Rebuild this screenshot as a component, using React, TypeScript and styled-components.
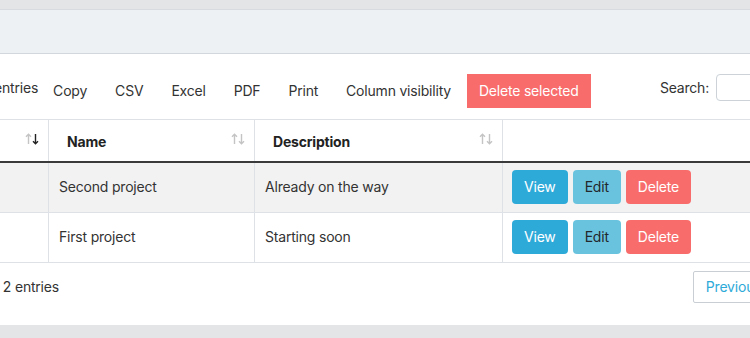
import styled, { createGlobalStyle } from 'styled-components';

type Project = {
  id: number;
  name: string;
  description: string;
};

const projects: Project[] = [
  { id: 2, name: 'Second project', description: 'Already on the way' },
  { id: 1, name: 'First project', description: 'Starting soon' },
];

const exportButtons = ['Copy', 'CSV', 'Excel', 'PDF', 'Print', 'Column visibility'];

const GlobalStyle = createGlobalStyle`
  html, body {
    margin: 0;
    padding: 0;
  }

  body {
    font-family: Inter, "Noto Sans", sans-serif;
    font-size: 14px;
    line-height: 20px;
    letter-spacing: -0.2px;
    color: #333;
    background: #e4e5e6;
  }

  button, input, select {
    font: inherit;
    letter-spacing: inherit;
  }
`;

function SortIcon({ active }: { active?: 'asc' | 'desc' }) {
  const up = active === 'asc' ? '#222' : '#c4c4c4';
  const down = active === 'desc' ? '#222' : '#c4c4c4';
  return (
    <svg width="14" height="12" viewBox="0 0 14 12" fill="none" strokeWidth="1.4">
      <path d="M3.5 11V1.2M1 3.7L3.5 1.2L6 3.7" stroke={up} />
      <path d="M10.5 1V10.8M8 8.3L10.5 10.8L13 8.3" stroke={down} />
    </svg>
  );
}

export default function App() {
  return (
    <Viewport>
      <GlobalStyle />
      <Shift>
        <Card>
          <CardHeader />
          <CardBody>
            <Toolbar>
              <LengthLabel>
                Show
                <Select defaultValue="10">
                  <option value="10">10</option>
                  <option value="25">25</option>
                  <option value="50">50</option>
                </Select>
                entries
              </LengthLabel>
              <ButtonGroup>
                {exportButtons.map(label => (
                  <ToolButton key={label}>{label}</ToolButton>
                ))}
                <ToolButton $danger>Delete selected</ToolButton>
              </ButtonGroup>
              <SearchLabel>
                Search:
                <SearchInput type="search" />
              </SearchLabel>
            </Toolbar>

            <Table>
              <colgroup>
                <col style={{ width: 163 }} />
                <col style={{ width: 206 }} />
                <col style={{ width: 248 }} />
                <col />
              </colgroup>
              <thead>
                <tr>
                  <Th>
                    <HeadInner>
                      ID
                      <SortIcon active="desc" />
                    </HeadInner>
                  </Th>
                  <Th>
                    <HeadInner>
                      Name
                      <SortIcon />
                    </HeadInner>
                  </Th>
                  <Th>
                    <HeadInner>
                      Description
                      <SortIcon />
                    </HeadInner>
                  </Th>
                  <Th />
                </tr>
              </thead>
              <tbody>
                {projects.map(project => (
                  <Row key={project.id}>
                    <Td>{project.id}</Td>
                    <Td>{project.name}</Td>
                    <Td>{project.description}</Td>
                    <ActionCell>
                      <Actions>
                        <ActionButton $variant="view">View</ActionButton>
                        <ActionButton $variant="edit">Edit</ActionButton>
                        <ActionButton $variant="delete">Delete</ActionButton>
                      </Actions>
                    </ActionCell>
                  </Row>
                ))}
              </tbody>
            </Table>

            <Footer>
              <Info>Showing 1 to 2 of 2 entries</Info>
              <Pagination>
                <PageButton>Previous</PageButton>
                <PageButton $current>1</PageButton>
                <PageButton>Next</PageButton>
              </Pagination>
            </Footer>
          </CardBody>
        </Card>
      </Shift>
    </Viewport>
  );
}

const Viewport = styled.div`
  width: 750px;
  height: 338px;
  overflow: hidden;
  background: #e4e5e6;
`;

const Shift = styled.div`
  width: 1015px;
  margin-left: -135px;
  padding-top: 9px;
`;

const Card = styled.div`
  border-top: 1px solid #d8dbe0;
  background: #fff;
`;

const CardHeader = styled.div`
  height: 43px;
  background: #eef1f4;
  border-bottom: 1px solid #d1d7dc;
`;

const CardBody = styled.div`
  padding: 20px 20px 22px;
`;

const Toolbar = styled.div`
  display: flex;
  align-items: flex-start;
`;

const LengthLabel = styled.label`
  display: flex;
  align-items: center;
  gap: 5px;
  height: 27px;
  margin-right: 3px;
`;

const Select = styled.select`
  width: 63px;
  height: 27px;
  padding: 0 6px;
  color: #333;
  border: 1px solid #ccd2d8;
  border-radius: 4px;
  background: #fff;
`;

const ButtonGroup = styled.div`
  display: flex;
  gap: 4px;
`;

const ToolButton = styled.button<{ $danger?: boolean }>`
  height: 34px;
  padding: 0 12px;
  border: 0;
  border-radius: 0;
  color: ${p => (p.$danger ? '#fff' : '#333')};
  background: ${p => (p.$danger ? '#f86c6b' : 'transparent')};
`;

const SearchLabel = styled.label`
  display: flex;
  align-items: center;
  gap: 7px;
  height: 27px;
  margin-left: auto;
`;

const SearchInput = styled.input`
  box-sizing: border-box;
  width: 144px;
  height: 27px;
  border: 1px solid #ccd2d8;
  border-radius: 4px;
`;

const Table = styled.table`
  width: 100%;
  margin-top: 11px;
  border-collapse: collapse;
  table-layout: fixed;
  border-top: 1px solid #dee2e6;
  border-bottom: 1px solid #dee2e6;
`;

const Th = styled.th`
  height: 42px;
  padding: 4px 9px 0 18px;
  box-sizing: border-box;
  text-align: left;
  font-weight: 700;
  color: #222;
  border-left: 1px solid #dee2e6;
  border-right: 1px solid #dee2e6;
  border-bottom: 2px solid #3a3a3a;
`;

const HeadInner = styled.div`
  display: flex;
  justify-content: space-between;
  align-items: center;

  svg {
    margin-top: -7px;
  }
`;

const Row = styled.tr`
  &:nth-child(odd) {
    background: #f2f2f2;
  }

  & + & td {
    border-top: 1px solid #dee2e6;
  }
`;

const Td = styled.td`
  height: 50px;
  padding: 0 10px;
  box-sizing: border-box;
  vertical-align: middle;
  border-left: 1px solid #dee2e6;
  border-right: 1px solid #dee2e6;
  white-space: nowrap;
`;

const ActionCell = styled(Td)`
  padding: 7px 9px 8px;
`;

const Actions = styled.div`
  display: flex;
  gap: 5px;
`;

const variantColors = {
  view: { bg: '#2eaad9', fg: '#fff' },
  edit: { bg: '#6ac3de', fg: '#23282c' },
  delete: { bg: '#f86c6b', fg: '#fff' },
};

const ActionButton = styled.button<{ $variant: keyof typeof variantColors }>`
  height: 34px;
  padding: 0 12px;
  border: 0;
  border-radius: 4px;
  color: ${p => variantColors[p.$variant].fg};
  background: ${p => variantColors[p.$variant].bg};
`;

const Footer = styled.div`
  display: flex;
  justify-content: space-between;
  align-items: center;
  margin-top: 8px;
`;

const Info = styled.div`
  margin-left: 4px;
  white-space: nowrap;
`;

const Pagination = styled.div`
  display: flex;
`;

const PageButton = styled.button<{ $current?: boolean }>`
  height: 32px;
  padding: 0 12px;
  margin-left: -1px;
  border: 1px solid #c8ced3;
  color: ${p => (p.$current ? '#fff' : '#2eaad9')};
  background: ${p => (p.$current ? '#2eaad9' : '#fff')};

  &:first-child {
    margin-left: 0;
    border-radius: 2px 0 0 2px;
  }

  &:last-child {
    border-radius: 0 2px 2px 0;
  }
`;
